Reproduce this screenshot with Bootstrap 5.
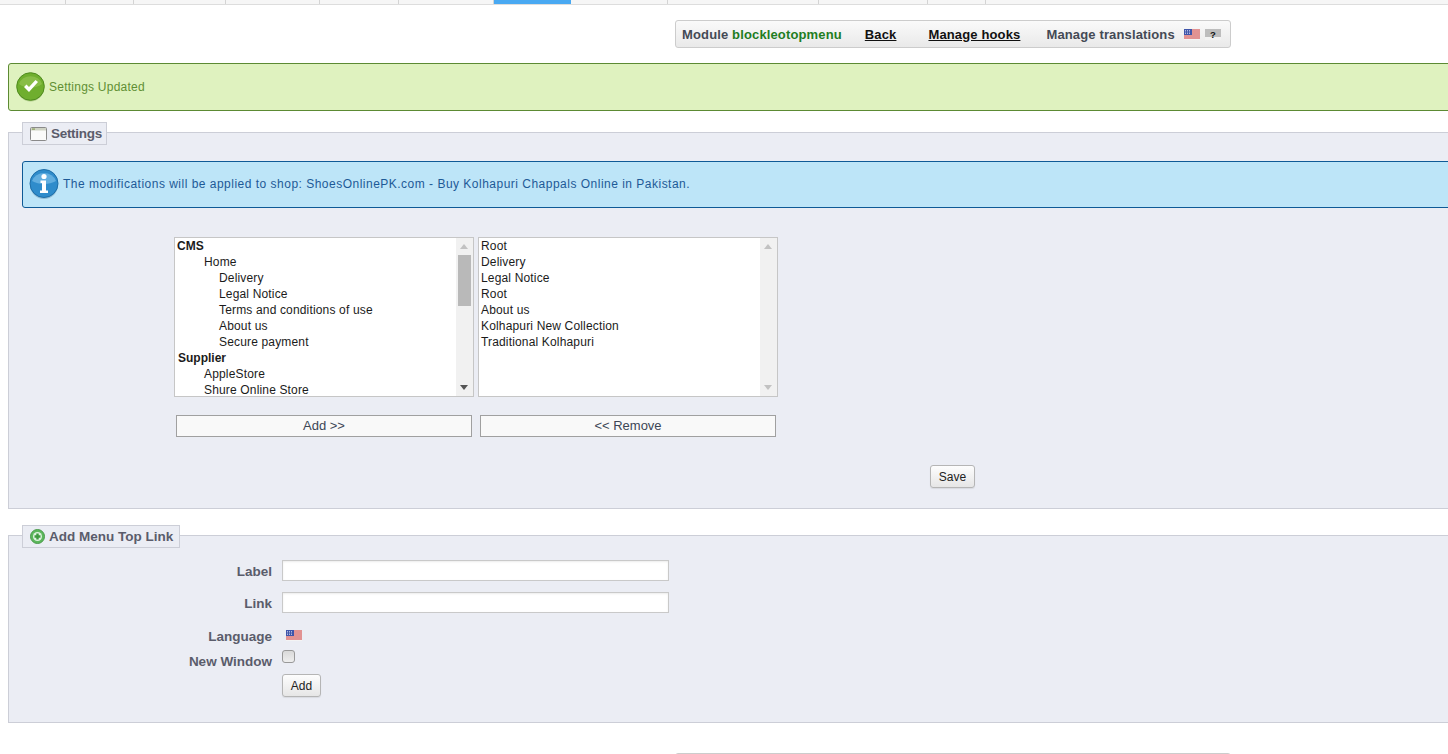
<!DOCTYPE html>
<html lang="en">
<head>
<meta charset="utf-8">
<title>Module blockleotopmenu</title>
<link href="https://cdn.jsdelivr.net/npm/bootstrap@5.3.0/dist/css/bootstrap.min.css" rel="stylesheet">
<style>
html,body{height:754px;overflow:hidden;background:#fff}
body{font-family:"Liberation Sans",Arial,sans-serif;font-size:12px;color:#222;line-height:16px}
.tabbar{height:5px;background:#f6f6f6;border-bottom:1px solid #ddd}
.tabcell{border-right:1px solid #d4d4d4;height:4px;flex:none}
.tabcell.on{background:#49a9f2;height:4px;border-right:0}
.tb{margin:15px 0 0 675px;width:556px;height:28px;border:1px solid #ccc;border-radius:3px;background:linear-gradient(#fafafa,#e9e9e9);padding:1px 6px 0;font-weight:700;font-size:13px;letter-spacing:.14px;color:#444a55;flex:none}
.tb a{color:#111;text-decoration:underline}
.tb .grn{color:#1f7d1f}
.tb .t1{margin-left:23px}.tb .t2{margin-left:32px}.tb .t3{margin-left:26px}
.flag1{margin-left:9px}.help-ic{margin-left:5px}
.msg{height:48px;border-radius:3px;margin-left:8px;width:1500px;font-size:12px}
.msg-ok{margin-top:15px;background:#dff2bf;border:1px solid #5c8a33;color:#5f8f33;padding-left:7px;gap:4px;letter-spacing:.24px}
.msg-info{height:47px;margin:16px 0 0 13px;background:#bde5f8;border:1px solid #0f5a96;color:#1d5a97;padding-left:6px;padding-bottom:1px;gap:4px;letter-spacing:.49px}
.panel{margin-left:8px;width:1500px;background:#ebedf4;border:1px solid #ccced7;position:relative}
.panel-a{margin-top:21px;height:377px}
.panel-b{margin-top:26px;height:188px}
.lgd{margin:-11px 0 0 13px;height:23px;padding:0 6px 0 7px;border:1px solid #ccced7;background:#ebedf4;font-weight:700;font-size:13.5px;color:#5a5c6b;gap:4px;width:max-content}
.lgd-a{padding-right:4px;letter-spacing:-.3px}
.lists{margin:29px 0 0 165px;gap:4px}
.lbox{width:300px;height:160px;background:#fff;border:1px solid #c6c6c6;font-size:12px;letter-spacing:.16px;color:#1b1b1b;overflow:hidden;flex:none}
.lbox-in{flex:1 1 auto;padding-top:0;min-width:0;white-space:nowrap}
.lrow{height:16px;padding-left:2px}
.i1{padding-left:29px}.i2{padding-left:44px}.bd{font-weight:700;letter-spacing:0}.sb{padding-left:3px}
.scr{width:17px;flex:none;background:#f1f1f1;position:relative}
.thumb{position:absolute;left:2px;right:2px;top:17px;height:51px;background:#b9b9b9}
.au,.ad{position:absolute;left:4px;width:0;height:0;border-left:4.5px solid transparent;border-right:4.5px solid transparent}
.au{top:6px;border-bottom:5px solid #c2c2c2}
.ad{bottom:6px;border-top:5px solid #c2c2c2}
.ad.dk{border-top-color:#555}
.movebtns{margin:18px 0 0 167px;gap:8px}
.mv{width:296px;height:22px;background:#f9f9f9;border:1px solid #a0a0a0;border-radius:0;padding:0;font-size:13px;color:#3c4656;line-height:20px;font-family:inherit}
.gbtn{height:23px;background:linear-gradient(#fdfdfd,#e6e6e6);border:1px solid #b5b5b5;border-radius:3px;padding:0;font-size:12px;color:#222;line-height:20px;font-family:inherit;box-shadow:0 1px 1px rgba(0,0,0,.08)}
.savewrap{margin:28px 0 0 921px}
.w45{width:45px}.w39{width:39px}
.frm{margin-top:12px}
.flab{width:263px;text-align:right;font-weight:700;font-size:13.5px;color:#5a5c6b;flex:none}
.fval{margin-left:10px}
.tin{width:387px;height:21px;border:1px solid #c9c9c9;background:#fff;box-shadow:inset 0 1px 2px rgba(0,0,0,.08);display:block;padding:0}
.fr1{height:21px}.fr2{height:21px;margin-top:11px}.fr3{margin-top:16px;height:17px}.fr4{margin-top:4px;height:19px}.fr5{margin-top:5px}
.fr1 .flab,.fr2 .flab{margin-top:2px}
.fr3 .flab{margin-top:-2px}.fr4 .flab{margin-top:4px}
.cbx{width:13px;height:13px;border:1px solid #999;border-radius:3px;background:linear-gradient(#d9d9d9,#eeeeee);margin-top:-6px;display:block}
.flagm{margin-left:4px;margin-top:-5px;display:block}
.tb2{margin-top:30px}
</style>
</head>
<body>
<div class="tabbar d-flex">
  <div class="tabcell" style="width:66px"></div><div class="tabcell" style="width:68px"></div><div class="tabcell" style="width:92px"></div><div class="tabcell" style="width:94px"></div><div class="tabcell" style="width:79px"></div><div class="tabcell" style="width:95px"></div><div class="tabcell on" style="width:77px"></div><div class="tabcell" style="width:97px"></div><div class="tabcell" style="width:151px"></div><div class="tabcell" style="width:109px"></div><div class="tabcell" style="width:58px"></div>
</div>

<div class="tb d-flex align-items-center">
  <span>Module <span class="grn">blockleotopmenu</span></span>
  <a href="#" class="t1">Back</a>
  <a href="#" class="t2">Manage hooks</a>
  <span class="t3">Manage translations</span>
  <svg class="flag1" width="16" height="11" viewBox="0 0 16 11"><rect width="16" height="11" fill="#f4f4f4"/><path d="M0 1h16M0 3h16M0 5h16M0 7h16M0 9h16" stroke="#cf3030" stroke-width="1"/><rect width="8" height="6" fill="#3f55aa"/><path d="M1 1.500h6M1 3h6M1 4.500h6" stroke="#dfe4f7" stroke-width=".7" stroke-dasharray="1 1"/></svg>
  <svg class="help-ic" width="16" height="11" viewBox="0 0 16 11"><rect width="16" height="11" fill="#bdbdbd"/><rect y="8" width="16" height="3" fill="#f2f2f2"/><text x="8" y="9" font-size="9.500" font-weight="700" text-anchor="middle" fill="#111" font-family="Liberation Sans">?</text></svg>
</div>

<div class="msg msg-ok d-flex align-items-center">
  <svg width="29" height="30" viewBox="0 0 29 30"><ellipse cx="14.500" cy="16" rx="13.500" ry="13.500" fill="#5b8f2a" opacity=".35"/><circle cx="14.500" cy="14.500" r="13.800" fill="#6fae2e" stroke="#4e8a1e"/><path d="M3 12a12 11 0 0 1 23 0c-7 5-16 5-23 0z" fill="#9ccb5c" opacity=".55"/><path d="M8 15l5 5 9-10-2.500-2-6.500 7-2.500-2.500z" fill="#fff"/></svg>
  <span>Settings Updated</span>
</div>

<div class="panel panel-a">
  <div class="lgd lgd-a d-flex align-items-center">
    <svg width="17" height="14" viewBox="0 0 17 14"><rect x=".5" y=".5" width="16" height="13" rx="1" fill="#fafafa" stroke="#8a8a8a"/><rect x="1" y="1" width="15" height="2.500" fill="#cfd3c4"/><rect x="2" y="1.500" width="3" height="1.200" fill="#8aa25c"/></svg>
    <span>Settings</span>
  </div>
  <div class="msg msg-info d-flex align-items-center">
    <svg width="30" height="30" viewBox="0 0 30 30"><ellipse cx="15" cy="16" rx="14" ry="14" fill="#3b6f93" opacity=".35"/><circle cx="15" cy="14.500" r="14" fill="#2f8ccb" stroke="#1e6ea8"/><path d="M3 12a12.500 11 0 0 1 24 0c-7 4-17 4-24 0z" fill="#8ccbf0" opacity=".55"/><circle cx="15" cy="7.500" r="2.600" fill="#fff"/><path d="M11.500 11.500h5.500v10h2v2.500h-8v-2.500h2v-7.500h-1.500z" fill="#fff"/></svg>
    <span>The modifications will be applied to shop: ShoesOnlinePK.com - Buy Kolhapuri Chappals Online in Pakistan.</span>
  </div>
  <div class="lists d-flex">
    <div class="lbox d-flex">
      <div class="lbox-in">
        <div class="lrow bd">CMS</div>
        <div class="lrow i1">Home</div>
        <div class="lrow i2">Delivery</div>
        <div class="lrow i2">Legal Notice</div>
        <div class="lrow i2">Terms and conditions of use</div>
        <div class="lrow i2">About us</div>
        <div class="lrow i2">Secure payment</div>
        <div class="lrow bd sb">Supplier</div>
        <div class="lrow i1">AppleStore</div>
        <div class="lrow i1">Shure Online Store</div>
      </div>
      <div class="scr"><div class="au"></div><div class="thumb"></div><div class="ad dk"></div></div>
    </div>
    <div class="lbox d-flex">
      <div class="lbox-in">
        <div class="lrow">Root</div>
        <div class="lrow">Delivery</div>
        <div class="lrow">Legal Notice</div>
        <div class="lrow">Root</div>
        <div class="lrow">About us</div>
        <div class="lrow">Kolhapuri New Collection</div>
        <div class="lrow">Traditional Kolhapuri</div>
      </div>
      <div class="scr"><div class="au"></div><div class="ad"></div></div>
    </div>
  </div>
  <div class="movebtns d-flex">
    <button type="button" class="mv">Add &gt;&gt;</button>
    <button type="button" class="mv">&lt;&lt; Remove</button>
  </div>
  <div class="savewrap"><button type="button" class="gbtn w45">Save</button></div>
</div>

<div class="panel panel-b">
  <div class="lgd d-flex align-items-center">
    <svg width="15" height="15" viewBox="0 0 15 15"><circle cx="7.500" cy="7.500" r="7" fill="#5cb85c" stroke="#4a9a4a"/><circle cx="7.500" cy="7.500" r="4.500" fill="#dff2df"/><path d="M6.300 4.500h2.400v1.800h1.800v2.400H8.700v1.800H6.300V8.700H4.500V6.300h1.800z" fill="#3f9a3f"/></svg>
    <span>Add Menu Top Link</span>
  </div>
  <div class="frm">
    <div class="d-flex align-items-center fr1"><label class="flab">Label</label><div class="fval"><input class="tin" type="text" aria-label="Label"></div></div>
    <div class="d-flex align-items-center fr2"><label class="flab">Link</label><div class="fval"><input class="tin" type="text" aria-label="Link"></div></div>
    <div class="d-flex align-items-center fr3"><label class="flab">Language</label><div class="fval"><svg class="flagm" width="16" height="11" viewBox="0 0 16 11"><rect width="16" height="11" fill="#f4f4f4"/><path d="M0 1h16M0 3h16M0 5h16M0 7h16M0 9h16" stroke="#cf3030" stroke-width="1"/><rect width="8" height="6" fill="#3f55aa"/><path d="M1 1.500h6M1 3h6M1 4.500h6" stroke="#dfe4f7" stroke-width=".7" stroke-dasharray="1 1"/></svg></div></div>
    <div class="d-flex align-items-center fr4"><label class="flab">New Window</label><div class="fval"><span class="cbx"></span></div></div>
    <div class="d-flex fr5"><div class="flab"></div><div class="fval"><button type="button" class="gbtn w39">Add</button></div></div>
  </div>
</div>

<div class="tb tb2"></div>
</body>
</html>
